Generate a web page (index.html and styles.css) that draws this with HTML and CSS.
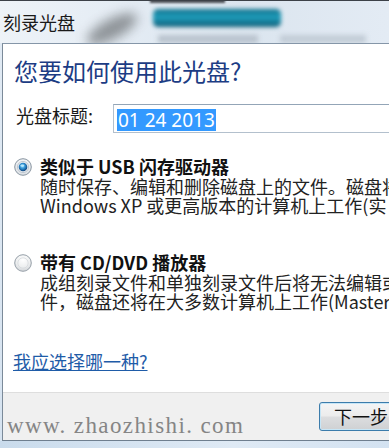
FILE: index.html
```html
<!DOCTYPE html>
<html lang="zh-CN">
<head>
<meta charset="utf-8">
<title>刻录光盘</title>
<link rel="stylesheet" href="styles.css">
</head>
<body>
<div class="window">
  <div class="titlebar">
    <span class="title">刻录光盘</span>
    <div class="blur blur-disc"></div>
    <div class="blur blur-bar"></div>
    <div class="blur blur-text"></div>
    <div class="blur blur-text2"></div>
    <div class="blur blur-top"></div>
  </div>
  <div class="dialog">
    <div class="content">
      <div class="heading">您要如何使用此光盘?</div>
      <div class="label-row">
        <span class="label">光盘标题:</span>
        <div class="input"><span class="selected">01 24 2013</span></div>
      </div>
      <div class="option first">
        <svg class="radio" width="18" height="18" viewBox="0 0 18 18">
          <defs>
            <radialGradient id="rbg1" cx="0.5" cy="0.35" r="0.7">
              <stop offset="0" stop-color="#ffffff"/>
              <stop offset="1" stop-color="#d6dbe0"/>
            </radialGradient>
            <radialGradient id="dot" cx="0.45" cy="0.4" r="0.6">
              <stop offset="0" stop-color="#8fdcff"/>
              <stop offset="0.5" stop-color="#2f8fd0"/>
              <stop offset="1" stop-color="#0d3f78"/>
            </radialGradient>
          </defs>
          <circle cx="9" cy="9" r="8.3" fill="url(#rbg1)" stroke="#8a96a2" stroke-width="1"/>
          <circle cx="9" cy="9" r="5.6" fill="#e9edf1" stroke="#b4bec8" stroke-width="0.8"/>
          <circle cx="9" cy="9" r="4.3" fill="url(#dot)"/>
          <ellipse cx="8.3" cy="7.6" rx="2" ry="1.2" fill="#c8f0ff" opacity="0.8"/>
        </svg>
        <div class="opt-body">
          <div class="opt-title">类似于 USB 闪存驱动器</div>
          <div class="opt-desc">随时保存、编辑和删除磁盘上的文件。磁盘将</div>
          <div class="opt-desc">Windows XP 或更高版本的计算机上工作(实</div>
        </div>
      </div>
      <div class="option second">
        <svg class="radio" width="18" height="18" viewBox="0 0 18 18">
          <defs>
            <radialGradient id="rbg2" cx="0.5" cy="0.3" r="0.75">
              <stop offset="0" stop-color="#ffffff"/>
              <stop offset="0.6" stop-color="#eceeef"/>
              <stop offset="1" stop-color="#c9cdd1"/>
            </radialGradient>
          </defs>
          <circle cx="9" cy="9" r="8.3" fill="url(#rbg2)" stroke="#97a0a9" stroke-width="1"/>
          <circle cx="9" cy="9" r="5.2" fill="none" stroke="#d4d8dc" stroke-width="0.8"/>
        </svg>
        <div class="opt-body">
          <div class="opt-title">带有 CD/DVD 播放器</div>
          <div class="opt-desc">成组刻录文件和单独刻录文件后将无法编辑或</div>
          <div class="opt-desc">件，磁盘还将在大多数计算机上工作(Master</div>
        </div>
      </div>
      <a class="link" href="#">我应选择哪一种?</a>
    </div>
    <div class="footer">
      <span class="watermark">www. zhaozhishi. com</span>
      <button class="btn" type="button">下一步</button>
    </div>
  </div>
</div>
</body>
</html>
```
FILE: styles.css
```css
html, body {
  margin: 0;
  padding: 0;
}
body {
  width: 389px;
  height: 448px;
  overflow: hidden;
  background: linear-gradient(90deg, #c9dbec, #dfeaf5 60%, #d3e2f1);
  font-family: "Noto Sans CJK SC", "Noto Sans", sans-serif;
}
.window {
  width: 480px;
  padding-left: 2px;
  background: linear-gradient(180deg, #e2ebf4, #d6e3f0);
}
.titlebar {
  position: relative;
  height: 42px;
  border-top: 1px solid #3c4148;
  margin-left: -2px;
  padding-left: 3px;
  display: flex;
  align-items: center;
  overflow: hidden;
  background: linear-gradient(90deg, #eef3f8 0%, #e4ecf4 25%, #dbe5ef 50%, #e3ebf4 80%, #e8eff7 100%);
}
.title {
  position: relative;
  z-index: 2;
  font-size: 18px;
  line-height: 22px;
  color: #1a1a1a;
}
.blur {
  position: absolute;
  z-index: 1;
}
.blur-disc {
  left: 84px;
  top: 18px;
  width: 56px;
  height: 20px;
  background: #7f8488;
  border-radius: 50%;
  transform: rotate(-28deg);
  filter: blur(6px);
  opacity: 0.85;
}
.blur-bar {
  left: 153px;
  top: 8px;
  width: 128px;
  height: 18px;
  border-radius: 5px;
  background: linear-gradient(180deg, #0f6d88, #1f9fbd 45%, #0d5a74 100%);
  filter: blur(2px);
}
.blur-text {
  left: 158px;
  top: 34px;
  width: 100px;
  height: 8px;
  background: #b9c3cd;
  filter: blur(2.5px);
}
.blur-text2 {
  left: 280px;
  top: 34px;
  width: 86px;
  height: 8px;
  background: #c2ccd6;
  filter: blur(2.5px);
}
.blur-top {
  left: 150px;
  top: -3px;
  width: 75px;
  height: 5px;
  background: #4b4f55;
  filter: blur(1px);
}
.dialog {
  background: #ffffff;
  border-left: 1px solid #7b8a99;
  border-top: 1px solid #8596a8;
  border-bottom: 1px solid #6f7f8f;
}
.content {
  box-sizing: border-box;
  height: 348px;
  padding: 12px 0 0 10px;
}
.heading {
  font-size: 24px;
  line-height: 30px;
  color: #1c3c84;
  margin-left: 1px;
  white-space: nowrap;
}
.label-row {
  display: flex;
  margin-top: 18px;
}
.label {
  width: 97px;
  margin-left: 3px;
  font-size: 18px;
  line-height: 22px;
  color: #1a1a1a;
  white-space: nowrap;
}
.input {
  flex: 1;
  box-sizing: border-box;
  height: 29px;
  padding: 3px 0 0 3px;
  border: 1px solid #b3c0cd;
  border-top-color: #93a5b7;
}
.selected {
  display: inline-block;
  background: #3399ff;
  color: #ffffff;
  font-family: "Noto Sans", sans-serif;
  font-size: 19px;
  line-height: 22px;
  padding: 0 1px;
}
.option {
  display: flex;
}
.option.first {
  margin-top: 22px;
}
.option.second {
  margin-top: 36px;
}
.radio {
  flex: none;
  margin: 3px 8px 0 1px;
}
.opt-body {
  white-space: nowrap;
}
.opt-title {
  font-size: 18px;
  line-height: 22px;
  font-weight: 700;
  color: #111111;
}
.opt-desc {
  font-size: 18px;
  line-height: 19px;
  color: #222222;
}
.link {
  display: inline-block;
  margin-top: 40px;
  font-size: 18px;
  line-height: 20px;
  color: #1f5ca8;
  text-decoration: underline;
}
.footer {
  box-sizing: border-box;
  height: 48px;
  background: #f0f0f0;
  border-top: 1px solid #dedede;
  display: flex;
  align-items: flex-start;
}
.watermark {
  margin-top: 20px;
  margin-left: 4px;
  font-family: "Liberation Serif", serif;
  font-size: 23px;
  line-height: 26px;
  letter-spacing: 1.4px;
  color: #858585;
  white-space: nowrap;
}
.btn {
  margin-top: 9px;
  margin-left: auto;
  margin-right: 73px;
  width: 90px;
  height: 29px;
  padding: 0 0 0 14px;
  text-align: left;
  white-space: nowrap;
  border: 1px solid #3c7cab;
  border-radius: 3px;
  box-shadow: inset 0 0 0 1px #c6e6f7;
  background: linear-gradient(180deg, #f4f5f6 0%, #ececec 48%, #dcdddf 52%, #cfd1d3 100%);
  font-family: "Noto Sans CJK SC", sans-serif;
  font-size: 18px;
  line-height: 27px;
  color: #111111;
}
```
